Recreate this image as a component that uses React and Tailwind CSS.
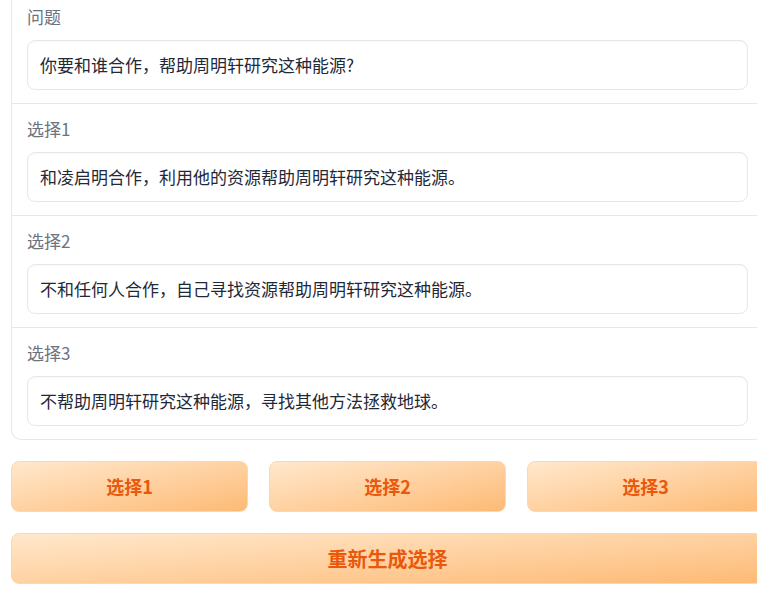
import React from 'react';

const SECTIONS = [
  { label: '问题', text: '你要和谁合作，帮助周明轩研究这种能源?' },
  { label: '选择1', text: '和凌启明合作，利用他的资源帮助周明轩研究这种能源。' },
  { label: '选择2', text: '不和任何人合作，自己寻找资源帮助周明轩研究这种能源。' },
  { label: '选择3', text: '不帮助周明轩研究这种能源，寻找其他方法拯救地球。' },
];

const btn =
  'h-[51px] rounded-lg border border-[#fed7aa] bg-gradient-to-br from-[#ffe8cc] to-[#fdba74] text-[#ea580c] font-bold';

function App() {
  return (
    <div
      className="w-[757px] h-[590px] overflow-hidden bg-white"
      style={{ fontFamily: '"Noto Sans CJK SC", "Noto Sans", sans-serif' }}
    >
      <div className="ml-[11px] w-[753px]">
        {/* Question + choices panel */}
        <div className="-mt-[8px] border-l border-b border-r border-[#e5e7eb] rounded-b-[10px]">
          {SECTIONS.map((s, i) => (
            <div
              key={s.label}
              className={`px-[15px] pt-[14px] pb-[13px] ${i > 0 ? 'border-t border-[#e5e7eb]' : ''}`}
            >
              <div className="text-[17px] leading-[22px] text-[#6b7280] mb-[12px]">{s.label}</div>
              <div className="h-[50px] flex items-center px-3 rounded-lg border border-[#e5e7eb] bg-white shadow-[inset_0_1px_3px_rgba(0,0,0,0.03)] text-[17px] text-[#1f2937]">
                {s.text}
              </div>
            </div>
          ))}
        </div>

        {/* Choice buttons */}
        <div className="mt-[21px] grid grid-cols-3 gap-[21px]">
          <button className={`${btn} text-[18px]`}>选择1</button>
          <button className={`${btn} text-[18px]`}>选择2</button>
          <button className={`${btn} text-[18px]`}>选择3</button>
        </div>

        <button className={`${btn} mt-[21px] w-full text-[20px]`}>重新生成选择</button>
      </div>
    </div>
  );
}

export default App;
